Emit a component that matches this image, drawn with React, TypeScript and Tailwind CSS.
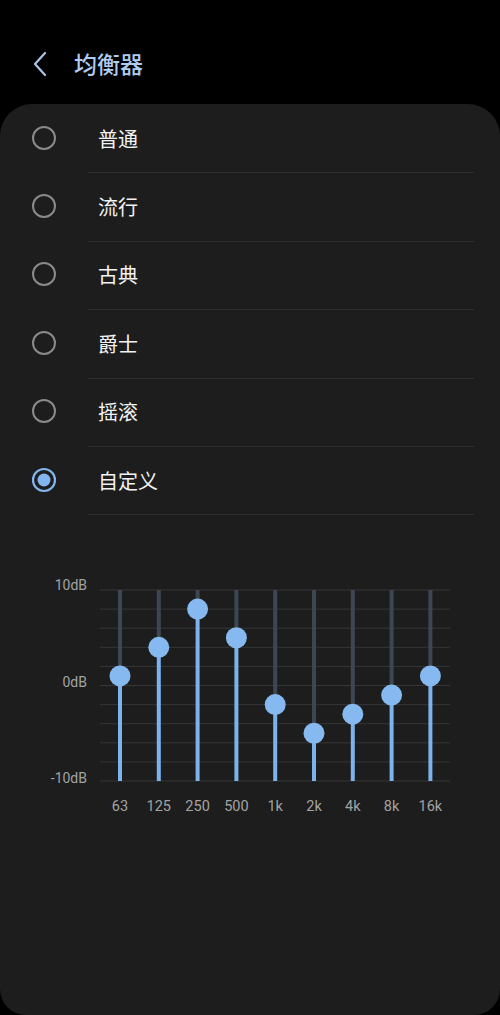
import React from "react";

const presets = ["普通", "流行", "古典", "爵士", "摇滚", "自定义"];
const bands = ["63", "125", "250", "500", "1k", "2k", "4k", "8k", "16k"];
const values = [1, 4, 8, 5, -2, -5, -3, -1, 1];

function Radio({ checked }: { checked: boolean }) {
  return (
    <svg width="28" height="28" viewBox="0 0 28 28">
      {checked ? (
        <>
          <circle cx="14" cy="14" r="11" fill="none" stroke="#82b6ee" strokeWidth="2.2" />
          <circle cx="14" cy="14" r="6.5" fill="#82b6ee" />
        </>
      ) : (
        <circle cx="14" cy="14" r="11" fill="none" stroke="#8a8a8a" strokeWidth="2" />
      )}
    </svg>
  );
}

function Chart() {
  const top = 20;
  const bottom = 211;
  const zero = (top + bottom) / 2;
  const step = (bottom - top) / 20;
  const xs = bands.map((_, i) => 120 + i * 38.8);
  const grid = Array.from({ length: 11 }, (_, i) => top + i * ((bottom - top) / 10));
  return (
    <svg width="500" height="250" viewBox="0 0 500 250" className="block">
      {grid.map((y, i) => (
        <line key={i} x1="100" x2="450" y1={y} y2={y} stroke="#363636" strokeWidth="1" />
      ))}
      <g fontFamily="Roboto, 'Noto Sans', sans-serif" fontSize="14" fill="#a3a3a3" textAnchor="end">
        <text x="87" y="20">10dB</text>
        <text x="87" y="117">0dB</text>
        <text x="87" y="213">-10dB</text>
      </g>
      {xs.map((x, i) => {
        const y = zero - values[i] * step;
        return (
          <g key={i}>
            <line x1={x} x2={x} y1={top} y2={y} stroke="#3d4753" strokeWidth="4" />
            <line x1={x} x2={x} y1={y} y2={bottom} stroke="#7db3ec" strokeWidth="4" />
            <circle cx={x} cy={y} r="10.5" fill="#86b9ef" />
            <text
              x={x}
              y="241"
              textAnchor="middle"
              fontFamily="Roboto, 'Noto Sans', sans-serif"
              fontSize="14.5"
              fill="#a3a3a3"
            >
              {bands[i]}
            </text>
          </g>
        );
      })}
    </svg>
  );
}

export default function App() {
  return (
    <div
      className="w-[500px] h-[1015px] bg-black flex flex-col overflow-hidden"
      style={{ fontFamily: "'Noto Sans', 'Noto Sans CJK SC', sans-serif" }}
    >
      <div className="h-[104px] flex items-center pl-[30px] pt-[22px] shrink-0">
        <svg width="20" height="28" viewBox="0 0 20 28" className="mt-[1px]">
          <path d="M15 3 L5 14 L15 25" fill="none" stroke="#a9c6ea" strokeWidth="2.2" strokeLinecap="round" strokeLinejoin="round" />
        </svg>
        <span
          className="ml-[24px] text-[23px] font-medium text-[#aecbf1] leading-none"
          style={{ fontFamily: "'Noto Sans CJK SC', sans-serif" }}
        >
          均衡器
        </span>
      </div>
      <div className="flex-1 bg-[#1d1d1d] rounded-t-[32px] rounded-b-[26px] flex flex-col pt-[1px]">
        <div className="flex flex-col">
          {presets.map((p, i) => (
            <div key={p} className="flex items-stretch h-[68.4px]">
              <div className="w-[88px] flex items-center pl-[30px] pb-[3px]">
                <Radio checked={i === presets.length - 1} />
              </div>
              <div className="flex-1 mr-[26px] flex items-center border-b border-[#2e2e2e] pl-[10px]">
                <span
                  className="text-[20px] text-[#f2f2f2] leading-none"
                  style={{ fontFamily: "'Noto Sans CJK SC', sans-serif" }}
                >
                  {p}
                </span>
              </div>
            </div>
          ))}
        </div>
        <div className="mt-[55px]">
          <Chart />
        </div>
      </div>
    </div>
  );
}
